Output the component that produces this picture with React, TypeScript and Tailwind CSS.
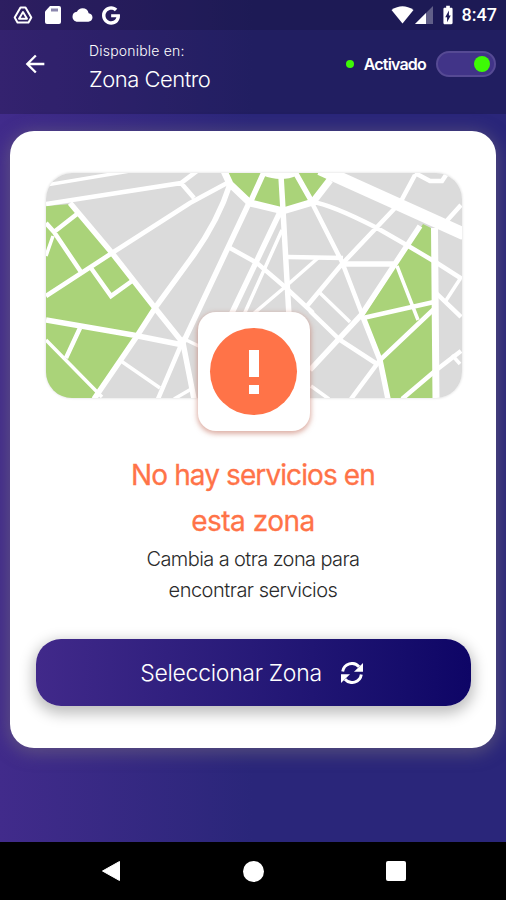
import { FaGoogle } from 'react-icons/fa';
import { MdArrowBack, MdBatteryChargingFull, MdCloud } from 'react-icons/md';

const roads: { w: number; d: string[] }[] = [
  {
    w: 3.5,
    d: [
      'M46 185 L130 171',
      'M53 236 L46 256',
      'M46 340 L102 397',
      'M121 361 L160 388',
      'M174 399 L193 388',
      'M182 338 L205 349',
      'M282 230 L242 319',
      'M252 315 L285 287 L318 258',
      'M320 293 L350 322',
      'M460 279 L445 302',
      'M311 386 L329 399',
      'M452 355 L460 364',
      'M397 266 L418 320',
    ],
  },
  {
    w: 4.5,
    d: [
      'M46 204 L181 183 L197 171',
      'M181 183 L194 198',
      'M46 296 L112 253 L190 203 L229 182',
      'M77 214 L54 232 L46 223',
      'M54 232 L81 272',
      'M91 268 L111 296 L132 281',
      'M80 328 L66 358',
      'M181 345 L158 399',
      'M230 248 L257 263 L285 287 L313 313',
      'M288 257 L343 258',
      'M312 202 Q330 204 377 228 L410 247 L437 263 L462 279',
      'M415 173 L430 181 H442 L448 172',
      'M461 205 L443 225',
      'M415 175 L400 203',
      'M395 208 L342 264 L307 306',
      'M434 309 L380 360 L351 399',
      'M363 318 L434 302',
      'M312 203 L342 262 L362 314',
      'M310 311 L340 340 L377 364',
      'M435 292 L461 317',
      'M402 399 L435 371 L461 351',
    ],
  },
  {
    w: 5.5,
    d: [
      'M70 203 L112 253 L155 308 L183 343',
      'M46 320 L133 335 L183 345',
      'M94 399 L137 336 L155 308 L190 260 Q218 222 230 184',
      'M249 203 L183 343 L194 399',
      'M264 172 L250 203',
      'M281 176 L283 210',
      'M295 172 L312 202',
      'M280 212 L229 319',
      'M283 210 L289 316',
      'M420 226 L362 314 L310 370',
      'M363 317 L380 360 L388 399',
      'M343 264 H397',
    ],
  },
  {
    w: 7,
    d: [
      'M224 171 L230 184 L250 203 L283 211 L313 202 L330 180',
      'M264 172 Q281 179 296 172',
      'M434.500 228 L436 399',
    ],
  },
  { w: 12.5, d: ['M320 169 L464 234'] },
];

const CityMap = () => (
  <svg viewBox="46 173 416 225" className="block w-[416px] h-[225px]">
    <rect x="46" y="173" width="416" height="225" fill="#dbdbdb" />
    <g fill="#aad379">
      <path d="M46 206 L71 204 L155 308 L137 336 L94 398 H46 Z" />
      <path d="M228 173 L231 184 L250 201 L283 210 L313 200 L330 180 L320 173 Z" />
      <path d="M423 224 L433 229 V398 H389 L380 360 L364 316 L396 266 Z" />
    </g>
    <g fill="none" stroke="#fff">
      {roads.map(({ w, d }) => (
        <path key={w} strokeWidth={w} d={d.join(' ')} />
      ))}
    </g>
  </svg>
);

const RefreshIcon = () => (
  <svg viewBox="0 0 22 22" className="ml-[19px] w-[22px] h-[22px]" fill="none" stroke="currentColor">
    <path d="M1.700 9.500 A9.300 9.300 0 0 1 18 4.800" strokeWidth="2.900" />
    <path d="M20.300 12.500 A9.300 9.300 0 0 1 4 17.200" strokeWidth="2.900" />
    <path d="M22 1 V9.800 H13 Z" fill="currentColor" stroke="none" />
    <path d="M0 21 V12.200 H9 Z" fill="currentColor" stroke="none" />
  </svg>
);

const StatusBar = () => (
  <div className="h-[30px] bg-black/30 flex items-center pl-[13px] pr-[9px] text-white">
    <svg viewBox="0 0 20 18" className="w-[20px] h-[18px]" fill="none" stroke="currentColor">
      <path d="M7.500 1.500 H12.500 L18.300 11.500 L15.500 16.500 H4.500 L1.700 11.500 Z" strokeWidth="2" strokeLinejoin="round" />
      <path d="M10 6 L14 12.800 H6 Z" strokeWidth="1.900" strokeLinejoin="round" />
    </svg>
    <svg viewBox="0 0 16 18" className="ml-[12px] w-[16px] h-[18px]" fill="currentColor">
      <path d="M5 0 H14 Q16 0 16 2 V16 Q16 18 14 18 H2 Q0 18 0 16 V5.500 Z" />
      <path d="M6 2.500 H13 V5.500 H6 Z" fill="#8b86ad" />
    </svg>
    <MdCloud className="ml-[11px] w-[21px] h-[20px]" />
    <FaGoogle className="ml-[9px] w-[18px] h-[19px]" />

    <div className="ml-auto flex items-center">
      <svg viewBox="0 0 23 18" className="w-[23px] h-[18px]" fill="currentColor">
        <path d="M0.500 4 Q11.500 -3.500 22.500 4 L11.500 17.500 Z" />
      </svg>
      <svg viewBox="0 0 18 18" className="ml-[1px] w-[18px] h-[18px]" fill="currentColor">
        <path d="M0 18 L18 0 V18 Z" opacity=".3" />
        <path d="M0 18 L11 7 V18 Z" />
      </svg>
      <MdBatteryChargingFull className="ml-[4px] w-[22px] h-[22px]" />
      <span className="ml-[3px] text-[18px] leading-none font-medium font-['Roboto',sans-serif]">8:47</span>
    </div>
  </div>
);

const Header = () => (
  <header className="h-[84px] bg-black/20 flex items-start text-white">
    <MdArrowBack className="ml-[21px] mt-[20px] size-[28px]" />
    <div className="ml-[40px] pt-[12px]">
      <p className="text-[14px] leading-[18px] tracking-[0.2px] font-light whitespace-nowrap">Disponible en:</p>
      <p className="mt-[7px] text-[22px] leading-[24px] tracking-[-0.5px] font-light whitespace-nowrap">Zona Centro</p>
    </div>
    <div className="ml-auto mr-[10px] mt-[21px] flex items-center">
      <span className="size-[8px] rounded-full bg-[#3dfa05]" />
      <span className="ml-[10px] text-[16px] leading-[26px] tracking-[-0.8px] font-semibold">Activado</span>
      <span className="ml-[10px] w-[60px] h-[26px] rounded-full border-2 border-[#564a94] bg-[#413488] flex items-center justify-end pr-[4px]">
        <span className="size-[16px] rounded-full bg-[#3dfa05]" />
      </span>
    </div>
  </header>
);

const NavBar = () => (
  <nav className="h-[58px] bg-black flex items-center justify-between pl-[101px] pr-[100px]">
    <svg viewBox="0 0 20 22" className="w-[20px] h-[22px]" fill="#fff">
      <path d="M18.500 1.500 V20.500 L1.500 11 Z" stroke="#fff" strokeLinejoin="round" />
    </svg>
    <span className="size-[21px] rounded-full bg-white" />
    <span className="size-[20px] rounded-[2px] bg-white" />
  </nav>
);

export default function App() {
  return (
    <div className="w-[506px] h-[900px] flex flex-col overflow-hidden bg-linear-to-r from-[#412b8b] to-[#2a267a] to-50% font-['Inter',sans-serif]">
      <StatusBar />
      <Header />

      <main className="flex-1 px-[10px] pt-[17px]">
        <section className="h-[617px] rounded-[24px] bg-white shadow-[0_3px_16px_3px_rgba(120,110,125,0.5)] flex flex-col items-center pt-[42px]">
          <div className="ml-[2px] rounded-[26px] overflow-hidden shadow-[0_0_2px_1px_#ededed]">
            <CityMap />
          </div>

          {/* Alerta sobre el borde inferior del mapa */}
          <div className="relative -mt-[86px] ml-[1px] w-[112px] h-[119px] rounded-[18px] bg-white shadow-[0_2px_5px_1px_rgba(190,100,80,0.5)] flex items-center justify-center">
            <div className="size-[87px] rounded-full bg-[#ff7348] flex flex-col items-center justify-center gap-[8px]">
              <span className="w-[10px] h-[27px] bg-white" />
              <span className="w-[10px] h-[9px] bg-white" />
            </div>
          </div>

          <h1 className="mt-[21px] text-center text-[28px] leading-[46px] tracking-[-0.9px] text-[#ff7348] [-webkit-text-stroke:0.3px_#ff7348] whitespace-nowrap">
            No hay servicios en
            <br />
            <span className="tracking-[-0.5px]">esta zona</span>
          </h1>
          <p className="text-center text-[20px] leading-[31px] tracking-[-0.6px] font-light text-[#2b2b2b] whitespace-nowrap">
            Cambia a otra zona para
            <br />
            <span className="tracking-[-0.5px]">encontrar servicios</span>
          </p>

          <button className="mt-[33px] w-[435px] h-[67px] shrink-0 rounded-[25px] bg-linear-to-r from-[#41298a] to-[#0e0566] shadow-[0_5px_14px_3px_rgba(0,0,0,0.25)] flex items-center justify-center pr-[3px] text-white">
            <span className="pt-[2px] text-[23px] tracking-[-0.3px] font-light whitespace-nowrap">Seleccionar Zona</span>
            <RefreshIcon />
          </button>
        </section>
      </main>

      <NavBar />
    </div>
  );
}
